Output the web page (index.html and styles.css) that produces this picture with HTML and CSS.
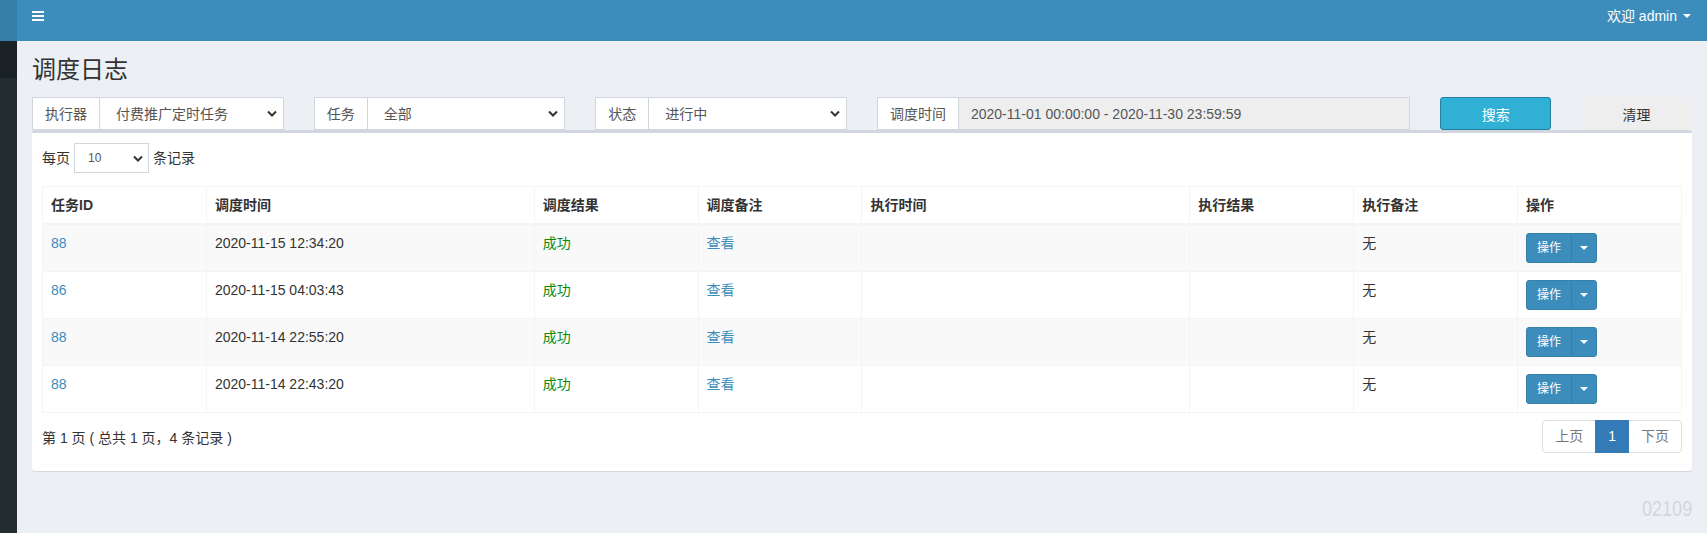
FILE: index.html
```html
<!DOCTYPE html>
<html lang="zh-CN">
<head>
<meta charset="utf-8">
<title>调度日志</title>
<link rel="stylesheet" href="styles.css">
</head>
<body>
<div class="app">
  <aside class="sidebar">
    <div class="sidebar-logo"></div>
    <div class="sidebar-panel"></div>
  </aside>
  <div class="main">
    <header class="navbar">
      <a class="toggle" href="#">
        <svg width="12" height="10" viewBox="0 0 12 10"><rect x="0" y="0" width="12" height="2" fill="#fff"/><rect x="0" y="4" width="12" height="2" fill="#fff"/><rect x="0" y="8" width="12" height="2" fill="#fff"/></svg>
      </a>
      <div class="user"><span>欢迎 admin</span><span class="caret"></span></div>
    </header>
    <section class="content">
      <h1 class="page-title">调度日志</h1>
      <div class="filters">
        <div class="col col-2">
          <div class="input-group"><span class="addon">执行器</span><select class="control select"><option>付费推广定时任务</option></select></div>
        </div>
        <div class="col col-2">
          <div class="input-group"><span class="addon">任务</span><select class="control select"><option>全部</option></select></div>
        </div>
        <div class="col col-2">
          <div class="input-group"><span class="addon">状态</span><select class="control select"><option>进行中</option></select></div>
        </div>
        <div class="col col-4">
          <div class="input-group"><span class="addon">调度时间</span><input class="control readonly" readonly value="2020-11-01 00:00:00 - 2020-11-30 23:59:59"></div>
        </div>
        <div class="col col-1"><button class="btn btn-info">搜索</button></div>
        <div class="col col-1"><button class="btn btn-default">清理</button></div>
      </div>

      <div class="box">
        <div class="length">
          <span>每页</span>
          <select class="select select-sm"><option>10</option></select>
          <span>条记录</span>
        </div>
        <table class="log-table">
          <colgroup>
            <col style="width:10%"><col style="width:20%"><col style="width:10%"><col style="width:10%">
            <col style="width:20%"><col style="width:10%"><col style="width:10%"><col style="width:10%">
          </colgroup>
          <thead>
            <tr><th>任务ID</th><th>调度时间</th><th>调度结果</th><th>调度备注</th><th>执行时间</th><th>执行结果</th><th>执行备注</th><th>操作</th></tr>
          </thead>
          <tbody>
            <tr>
              <td><a href="#">88</a></td><td>2020-11-15 12:34:20</td><td class="ok">成功</td><td><a href="#">查看</a></td><td></td><td></td><td>无</td>
              <td><div class="btn-group"><button class="op">操作</button><button class="op-toggle"><span class="caret"></span></button></div></td>
            </tr>
            <tr>
              <td><a href="#">86</a></td><td>2020-11-15 04:03:43</td><td class="ok">成功</td><td><a href="#">查看</a></td><td></td><td></td><td>无</td>
              <td><div class="btn-group"><button class="op">操作</button><button class="op-toggle"><span class="caret"></span></button></div></td>
            </tr>
            <tr>
              <td><a href="#">88</a></td><td>2020-11-14 22:55:20</td><td class="ok">成功</td><td><a href="#">查看</a></td><td></td><td></td><td>无</td>
              <td><div class="btn-group"><button class="op">操作</button><button class="op-toggle"><span class="caret"></span></button></div></td>
            </tr>
            <tr>
              <td><a href="#">88</a></td><td>2020-11-14 22:43:20</td><td class="ok">成功</td><td><a href="#">查看</a></td><td></td><td></td><td>无</td>
              <td><div class="btn-group"><button class="op">操作</button><button class="op-toggle"><span class="caret"></span></button></div></td>
            </tr>
          </tbody>
        </table>
        <div class="table-footer">
          <div class="info">第 1 页 ( 总共 1 页，4 条记录 )</div>
          <ul class="pagination">
            <li class="disabled"><a href="#">上页</a></li>
            <li class="active"><a href="#">1</a></li>
            <li class="disabled"><a href="#">下页</a></li>
          </ul>
        </div>
      </div>
      <div class="footer-code"><span>02109</span></div>
    </section>
  </div>
</div>
</body>
</html>
```

FILE: styles.css
```css
* { box-sizing: border-box; }
html, body { margin: 0; padding: 0; }
body {
  background: #ecf0f5;
  color: #333;
  font-family: "Liberation Sans", "Noto Sans CJK SC", sans-serif;
  font-size: 14px;
  line-height: 20px;
}
a { color: #3c8dbc; text-decoration: none; }
button, select, input { font-family: inherit; }

.app { display: flex; min-height: 100vh; }

.sidebar { width: 17px; flex: 0 0 17px; background: #222d32; }
.sidebar-logo { height: 41px; background: #367fa9; }
.sidebar-panel { height: 37px; background: #1a2226; }

.main { flex: 1; min-width: 0; }

.navbar {
  height: 41px;
  background: #3c8dbc;
  display: flex;
  justify-content: space-between;
  align-items: flex-start;
  padding: 0 16px 0 15px;
}
.toggle { display: block; margin-top: 11px; height: 10px; line-height: 0; }
.user {
  color: #fff;
  padding-top: 6px;
  display: flex;
  align-items: center;
  white-space: nowrap;
}
.caret {
  display: inline-block;
  width: 0; height: 0;
  border-top: 4px solid #fff;
  border-left: 4px solid transparent;
  border-right: 4px solid transparent;
}
.user .caret { margin-left: 6px; }

.content { padding: 0 15px; }
.page-title {
  margin: 0;
  padding-top: 16px;
  font-size: 24px;
  line-height: 26px;
  font-weight: normal;
  color: #333;
}

.filters { display: flex; margin: 14px -15px 0; }
.col { padding: 0 15px; }
.col-1 { flex: 0 0 8.33333%; }
.col-2 { flex: 0 0 16.66667%; }
.col-4 { flex: 0 0 33.33333%; }

.input-group { display: flex; height: 33px; }
.addon {
  display: flex;
  align-items: center;
  padding: 0 12px;
  border: 1px solid #d2d6de;
  border-right: 0;
  background: #fff;
  color: #555;
  white-space: nowrap;
}
.control {
  flex: 1;
  min-width: 0;
  height: 33px;
  border: 1px solid #d2d6de;
  border-radius: 0;
  font-size: 14px;
  color: #555;
  background-color: #fff;
  outline: none;
}
.select {
  appearance: none;
  -webkit-appearance: none;
  padding: 0 20px 0 16px;
  background-image: url("data:image/svg+xml,%3Csvg xmlns='http://www.w3.org/2000/svg' width='10' height='7' viewBox='0 0 10 7'%3E%3Cpath d='M1 1.5l4 4 4-4' fill='none' stroke='%23333' stroke-width='2'/%3E%3C/svg%3E");
  background-repeat: no-repeat;
  background-position: right 6px center;
}
.readonly { background: #eee; padding: 0 12px; }

.btn {
  display: block;
  width: 100%;
  height: 33px;
  border-radius: 3px;
  font-size: 14px;
  cursor: pointer;
}
.btn-info { background: #31b0d5; border: 1px solid #24809c; color: #fff; }
.btn-default { background: #eee; border: 1px solid #eee; color: #333; }

.box {
  background: #fff;
  border-top: 3px solid #d2d6de;
  border-radius: 3px;
  box-shadow: 0 1px 1px rgba(0,0,0,0.1);
  padding: 10px 10px 18px;
}
.length { display: flex; align-items: center; gap: 4px; height: 30px; }
.select-sm {
  width: 75px;
  height: 30px;
  font-size: 12px;
  color: #555;
  border: 1px solid #d2d6de;
  border-radius: 0;
  padding-left: 13px;
  background-color: #fff;
  background-position: right 5px center;
  outline: none;
}

.log-table {
  width: 100%;
  margin-top: 13px;
  border-collapse: collapse;
  table-layout: fixed;
  border: 1px solid #f4f4f4;
}
.log-table th, .log-table td {
  border: 1px solid #f4f4f4;
  padding: 8px;
  text-align: left;
  vertical-align: top;
  line-height: 20px;
}
.log-table th { font-weight: bold; border-bottom-width: 2px; }
.log-table tbody tr:nth-child(odd) { background: #f9f9f9; }
.ok { color: #0a8a0a; }

.btn-group { display: flex; }
.op, .op-toggle {
  height: 30px;
  background: #3c8dbc;
  border: 1px solid #367fa9;
  color: #fff;
  font-size: 12px;
  line-height: 18px;
  cursor: pointer;
}
.op { padding: 0 10px; border-radius: 3px 0 0 3px; }
.op-toggle {
  padding: 0 8px;
  margin-left: -1px;
  border-radius: 0 3px 3px 0;
  display: flex;
  align-items: center;
}

.table-footer {
  display: flex;
  justify-content: space-between;
  align-items: flex-start;
  margin-top: 7px;
}
.info { padding-top: 8px; }
.pagination { display: flex; list-style: none; margin: 0; padding: 0; }
.pagination li a {
  display: block;
  padding: 6px 12px;
  line-height: 19px;
  border: 1px solid #ddd;
  margin-left: -1px;
  background: #fff;
  color: #777;
}
.pagination li:first-child a { margin-left: 0; border-radius: 4px 0 0 4px; }
.pagination li:last-child a { border-radius: 0 4px 4px 0; }
.pagination li.active a { background: #337ab7; border-color: #337ab7; color: #fff; position: relative; }

.footer-code {
  text-align: right;
  margin-top: 27px;
  font-size: 22px;
  line-height: 22px;
  color: #d2d6de;
}
.footer-code span { display: inline-block; transform: scaleX(0.82); transform-origin: right center; }
```
